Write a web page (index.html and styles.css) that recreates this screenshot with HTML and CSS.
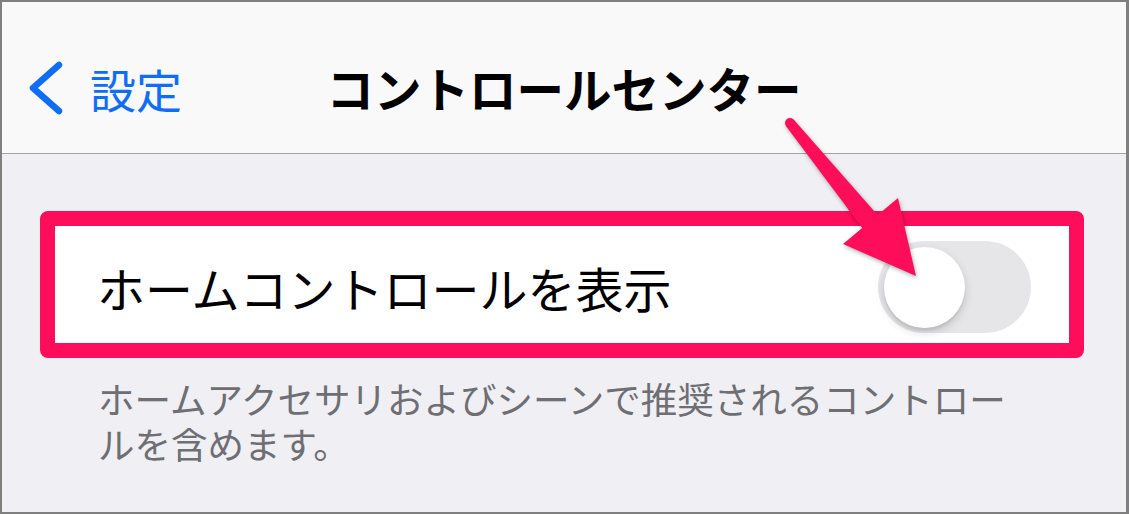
FILE: index.html
```html
<!DOCTYPE html>
<html lang="ja">
<head>
<meta charset="utf-8">
<title>コントロールセンター</title>
<link rel="stylesheet" href="styles.css">
</head>
<body>
<div class="screen">
  <header class="navbar">
    <a class="back" href="#">
      <svg class="back-chevron" width="36" height="60" viewBox="0 0 36 60" aria-hidden="true">
        <path d="M31 7 L5 30 L31 53" fill="none" stroke="currentColor" stroke-width="6.5" stroke-linecap="round" stroke-linejoin="round"/>
      </svg>
      <span class="back-label">設定</span>
    </a>
    <h1 class="nav-title">コントロールセンター</h1>
    <span class="nav-spacer"></span>
  </header>

  <main class="content">
    <section class="highlight">
      <div class="cell">
        <span class="cell-label">ホームコントロールを表示</span>
        <span class="switch" role="switch" aria-checked="false">
          <span class="switch-knob"></span>
        </span>
      </div>
    </section>
    <p class="footnote">ホームアクセサリおよびシーンで推奨されるコントロールを含めます。</p>
  </main>

  <svg class="pointer" width="1129" height="514" viewBox="0 0 1129 514" aria-hidden="true">
    <circle cx="790" cy="123" r="5" fill="#fe0e5a"/>
    <polygon points="793.9,119.8 786.1,126.2 866,233 882,220" fill="#fe0e5a"/>
    <polygon points="843,244 898,198 916,276" fill="#fe0e5a"/>
  </svg>
</div>
</body>
</html>
```

FILE: styles.css
```css
* {
  box-sizing: border-box;
}

html, body {
  margin: 0;
  padding: 0;
}

body {
  font-family: "Noto Sans CJK JP", "Noto Sans", sans-serif;
  background: #efeff4;
}

.screen {
  position: relative;
  width: 1129px;
  height: 514px;
  border: 2px solid #7f7f7f;
  border-right-width: 3px;
  background: #efeff4;
  overflow: hidden;
  display: flex;
  flex-direction: column;
}

/* navigation bar */
.navbar {
  height: 152px;
  flex: none;
  background: #f9f9fa;
  border-bottom: 1px solid #a3a3a6;
  display: grid;
  grid-template-columns: 1fr auto 1fr;
  align-items: center;
  padding-top: 20px;
}

.back {
  display: flex;
  align-items: center;
  gap: 26px;
  padding-left: 26px;
  color: #0f6ef5;
  text-decoration: none;
  justify-self: start;
}

.back-chevron {
  display: block;
  flex: none;
}

.back-label {
  font-size: 46px;
  line-height: 1;
}

.nav-title {
  margin: 0;
  font-size: 47.5px;
  font-weight: 700;
  line-height: 1;
  color: #000;
  white-space: nowrap;
}

/* settings cell */
.content {
  flex: 1;
  padding: 57px 42px 0 38px;
}

.highlight {
  border: 15px solid #fe0e5a;
  border-radius: 8px;
  background: #fff;
}

.cell {
  height: 117px;
  display: flex;
  align-items: center;
  justify-content: space-between;
  padding: 5px 38px 0 42px;
}

.cell-label {
  font-size: 48px;
  line-height: 1;
  color: #000;
}

.switch {
  position: relative;
  width: 153px;
  height: 92px;
  border-radius: 46px;
  background: #e6e6e8;
  flex: none;
}

.switch-knob {
  position: absolute;
  left: 6px;
  top: 6px;
  width: 81px;
  height: 81px;
  border-radius: 50%;
  background: #fff;
  box-shadow: 0 4px 10px rgba(0, 0, 0, 0.16), 0 3px 2px rgba(0, 0, 0, 0.06);
}

.footnote {
  margin: 18px 0 0;
  padding: 0 61px 0 58px;
  font-size: 36.5px;
  line-height: 45px;
  color: #6e6e73;
}

/* annotation arrow */
.pointer {
  position: absolute;
  left: -2px;
  top: -2px;
  filter: drop-shadow(1px 2px 2px rgba(0, 0, 0, 0.3));
  pointer-events: none;
}
```
